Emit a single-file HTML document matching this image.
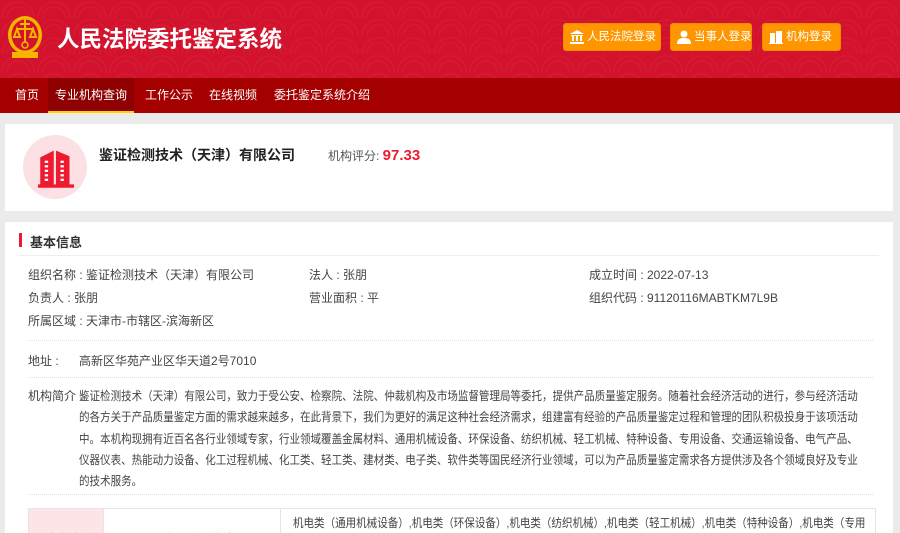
<!DOCTYPE html>
<html><head><meta charset="utf-8">
<style>
*{margin:0;padding:0;box-sizing:border-box}
html,body{width:900px;height:533px;overflow:hidden}
body{background:#ebebeb;font-family:"Liberation Sans","Noto Sans CJK SC",sans-serif;color:#333;font-size:12px;position:relative}
.top{position:absolute;left:0;top:0;width:900px;height:78px;background:#d3132d;
background-image:radial-gradient(circle at 50% 100%,transparent 10px,rgba(255,255,255,.05) 11px,transparent 12px,transparent 15px,rgba(255,255,255,.05) 16px,transparent 17px);background-size:36px 18px}
.title{position:absolute;left:57px;top:22px;color:#fff;font-size:22.5px;font-weight:bold;white-space:nowrap}
.btn{position:absolute;top:23px;height:28px;background:#ff9600;border:1px solid #f08a00;border-radius:3px;color:#fff;font-size:11.5px;line-height:26px;padding-left:23px;white-space:nowrap;overflow:hidden}
.btn svg{position:absolute;left:6px;top:6px}
.nav{position:absolute;left:0;top:78px;width:900px;height:35px;background:#a50000}
.nav span{position:absolute;top:0;line-height:35px;color:#fff;font-size:12px;white-space:nowrap}
.nav .act{background:#8f0000;border-bottom:2px solid #ffd400;height:35px}
.card{position:absolute;left:5px;width:888px;background:#fff}
.dot{position:absolute;left:28px;width:845px;border-top:1px dotted #ddd}
.t{position:absolute;font-size:12px;color:#444;white-space:nowrap}
.ln{position:absolute;left:79px;font-size:12px;color:#444;white-space:nowrap;transform:scaleX(0.877);transform-origin:0 0}
</style></head><body>
<div class="top">
 <svg style="position:absolute;left:5px;top:13px" width="40" height="47" viewBox="0 0 40 47">
  <ellipse cx="20" cy="22" rx="17" ry="19" fill="#f7b500"/>
  <ellipse cx="20" cy="22" rx="13.5" ry="15.5" fill="#d3132d"/>
  <path d="M20 6v24M15 11h10M11 16h18M12 16l-3 8h6zM28 16l-3 8h6z" stroke="#f7b500" stroke-width="2" fill="none"/>
  <circle cx="20" cy="32" r="3" fill="none" stroke="#f7b500" stroke-width="1.5"/>
  <rect x="7" y="39" width="26" height="6" fill="#f7b500"/>
 </svg>
 <div class="title">人民法院委托鉴定系统</div>
 <div class="btn" style="left:563px;width:98px">
  <svg width="14" height="14" viewBox="0 0 14 14" fill="#fff"><path d="M7 0L0 4h14zM1 5h12v1H1zM2 6h2v5H2zM6 6h2v5H6zM10 6h2v5h-2zM0 12h14v2H0z"/></svg>人民法院登录</div>
 <div class="btn" style="left:670px;width:82px">
  <svg width="14" height="14" viewBox="0 0 14 14" fill="#fff"><circle cx="7" cy="4" r="3.5"/><path d="M0 14c0-5 3-6 7-6s7 1 7 6z"/></svg>当事人登录</div>
 <div class="btn" style="left:762px;width:79px">
  <svg width="14" height="14" viewBox="0 0 14 14" fill="#fff"><path d="M1 3h5v10H1zM7 1h6v12H7zM0 13h14v1H0z"/></svg>机构登录</div>
</div>
<div class="nav">
 <span style="left:15px">首页</span>
 <span class="act" style="left:48px;width:86px;text-align:center">专业机构查询</span>
 <span style="left:145px">工作公示</span>
 <span style="left:209px">在线视频</span>
 <span style="left:274px">委托鉴定系统介绍</span>
</div>
<div class="card" style="top:124px;height:87px">
 <div style="position:absolute;left:18px;top:11px;width:64px;height:64px;border-radius:50%;background:#fde0e3"></div>
 <svg style="position:absolute;left:33px;top:24px" width="36" height="40" viewBox="0 0 32 35" fill="#ee1a2f">
  <path d="M2 8l12-6v31H2zM16 2l12 5v26H16zM0 32h32v3H0z"/>
  <g fill="#fff"><rect x="6" y="11" width="3" height="2"/><rect x="6" y="15" width="3" height="2"/><rect x="6" y="19" width="3" height="2"/><rect x="6" y="23" width="3" height="2"/><rect x="6" y="27" width="3" height="2"/><rect x="20" y="11" width="3" height="2"/><rect x="20" y="15" width="3" height="2"/><rect x="20" y="19" width="3" height="2"/><rect x="20" y="23" width="3" height="2"/><rect x="20" y="27" width="3" height="2"/></g>
 </svg>
 <div class="t" style="left:94px;top:21px;font-size:14px;font-weight:bold;color:#222">鉴证检测技术（天津）有限公司</div>
 <div class="t" style="left:323px;top:23px;color:#555">机构评分: <b style="color:#ee1a2f;font-size:15px">97.33</b></div>
</div>
<div class="card" style="top:222px;height:311px">
 <div style="position:absolute;left:14px;top:11px;width:3px;height:14px;background:#ee1a2f"></div>
 <div class="t" style="left:25px;top:10px;font-size:13px;font-weight:bold;color:#333">基本信息</div>
 <div style="position:absolute;left:14px;top:33px;width:860px;border-top:1px solid #eee"></div>
</div>
<div class="t" style="left:28px;top:266px">组织名称 : 鉴证检测技术（天津）有限公司</div>
<div class="t" style="left:309px;top:266px">法人 : 张朋</div>
<div class="t" style="left:589px;top:266px">成立时间 : 2022-07-13</div>
<div class="t" style="left:28px;top:289px">负责人 : 张朋</div>
<div class="t" style="left:309px;top:289px">营业面积 : 平</div>
<div class="t" style="left:589px;top:289px">组织代码 : 91120116MABTKM7L9B</div>
<div class="t" style="left:28px;top:312px">所属区域 : 天津市-市辖区-滨海新区</div>
<div class="dot" style="top:340px"></div>
<div class="t" style="left:28px;top:352px">地址 :</div>
<div class="t" style="left:79px;top:352px">高新区华苑产业区华天道2号7010</div>
<div class="dot" style="top:377px"></div>
<div class="t" style="left:28px;top:387px">机构简介 :</div>
<div class="ln" style="top:387px">鉴证检测技术（天津）有限公司，致力于受公安、检察院、法院、仲裁机构及市场监督管理局等委托，提供产品质量鉴定服务。随着社会经济活动的进行，参与经济活动</div>
<div class="ln" style="top:408px">的各方关于产品质量鉴定方面的需求越来越多，在此背景下，我们为更好的满足这种社会经济需求，组建富有经验的产品质量鉴定过程和管理的团队积极投身于该项活动</div>
<div class="ln" style="top:430px">中。本机构现拥有近百名各行业领域专家，行业领域覆盖金属材料、通用机械设备、环保设备、纺织机械、轻工机械、特种设备、专用设备、交通运输设备、电气产品、</div>
<div class="ln" style="top:451px">仪器仪表、热能动力设备、化工过程机械、化工类、轻工类、建材类、电子类、软件类等国民经济行业领域，可以为产品质量鉴定需求各方提供涉及各个领域良好及专业</div>
<div class="ln" style="top:472px">的技术服务。</div>
<div class="dot" style="top:494px"></div>
<div style="position:absolute;left:28px;top:508px;width:848px;height:40px;border:1px solid #e5e5e5">
 <div style="position:absolute;left:0;top:0;width:75px;height:40px;background:#fde5e7;border-right:1px solid #e5e5e5"></div>
 <div class="t" style="left:18px;top:21px">专业类别</div>
 <div style="position:absolute;left:251px;top:0;height:40px;border-left:1px solid #e5e5e5"></div>
 <div class="t" style="left:135px;top:21px">产品质量鉴定</div>
 <div class="ln" style="left:264px;top:5px">机电类（通用机械设备）,机电类（环保设备）,机电类（纺织机械）,机电类（轻工机械）,机电类（特种设备）,机电类（专用</div>
 <div class="ln" style="left:264px;top:24px">设备）,机电类（交通运输设备）,机电类（电气产品）,机电类（热能动力设备）,机电类（化工过程机械）,化工类,轻工类,建材</div>
</div>
</body></html>
